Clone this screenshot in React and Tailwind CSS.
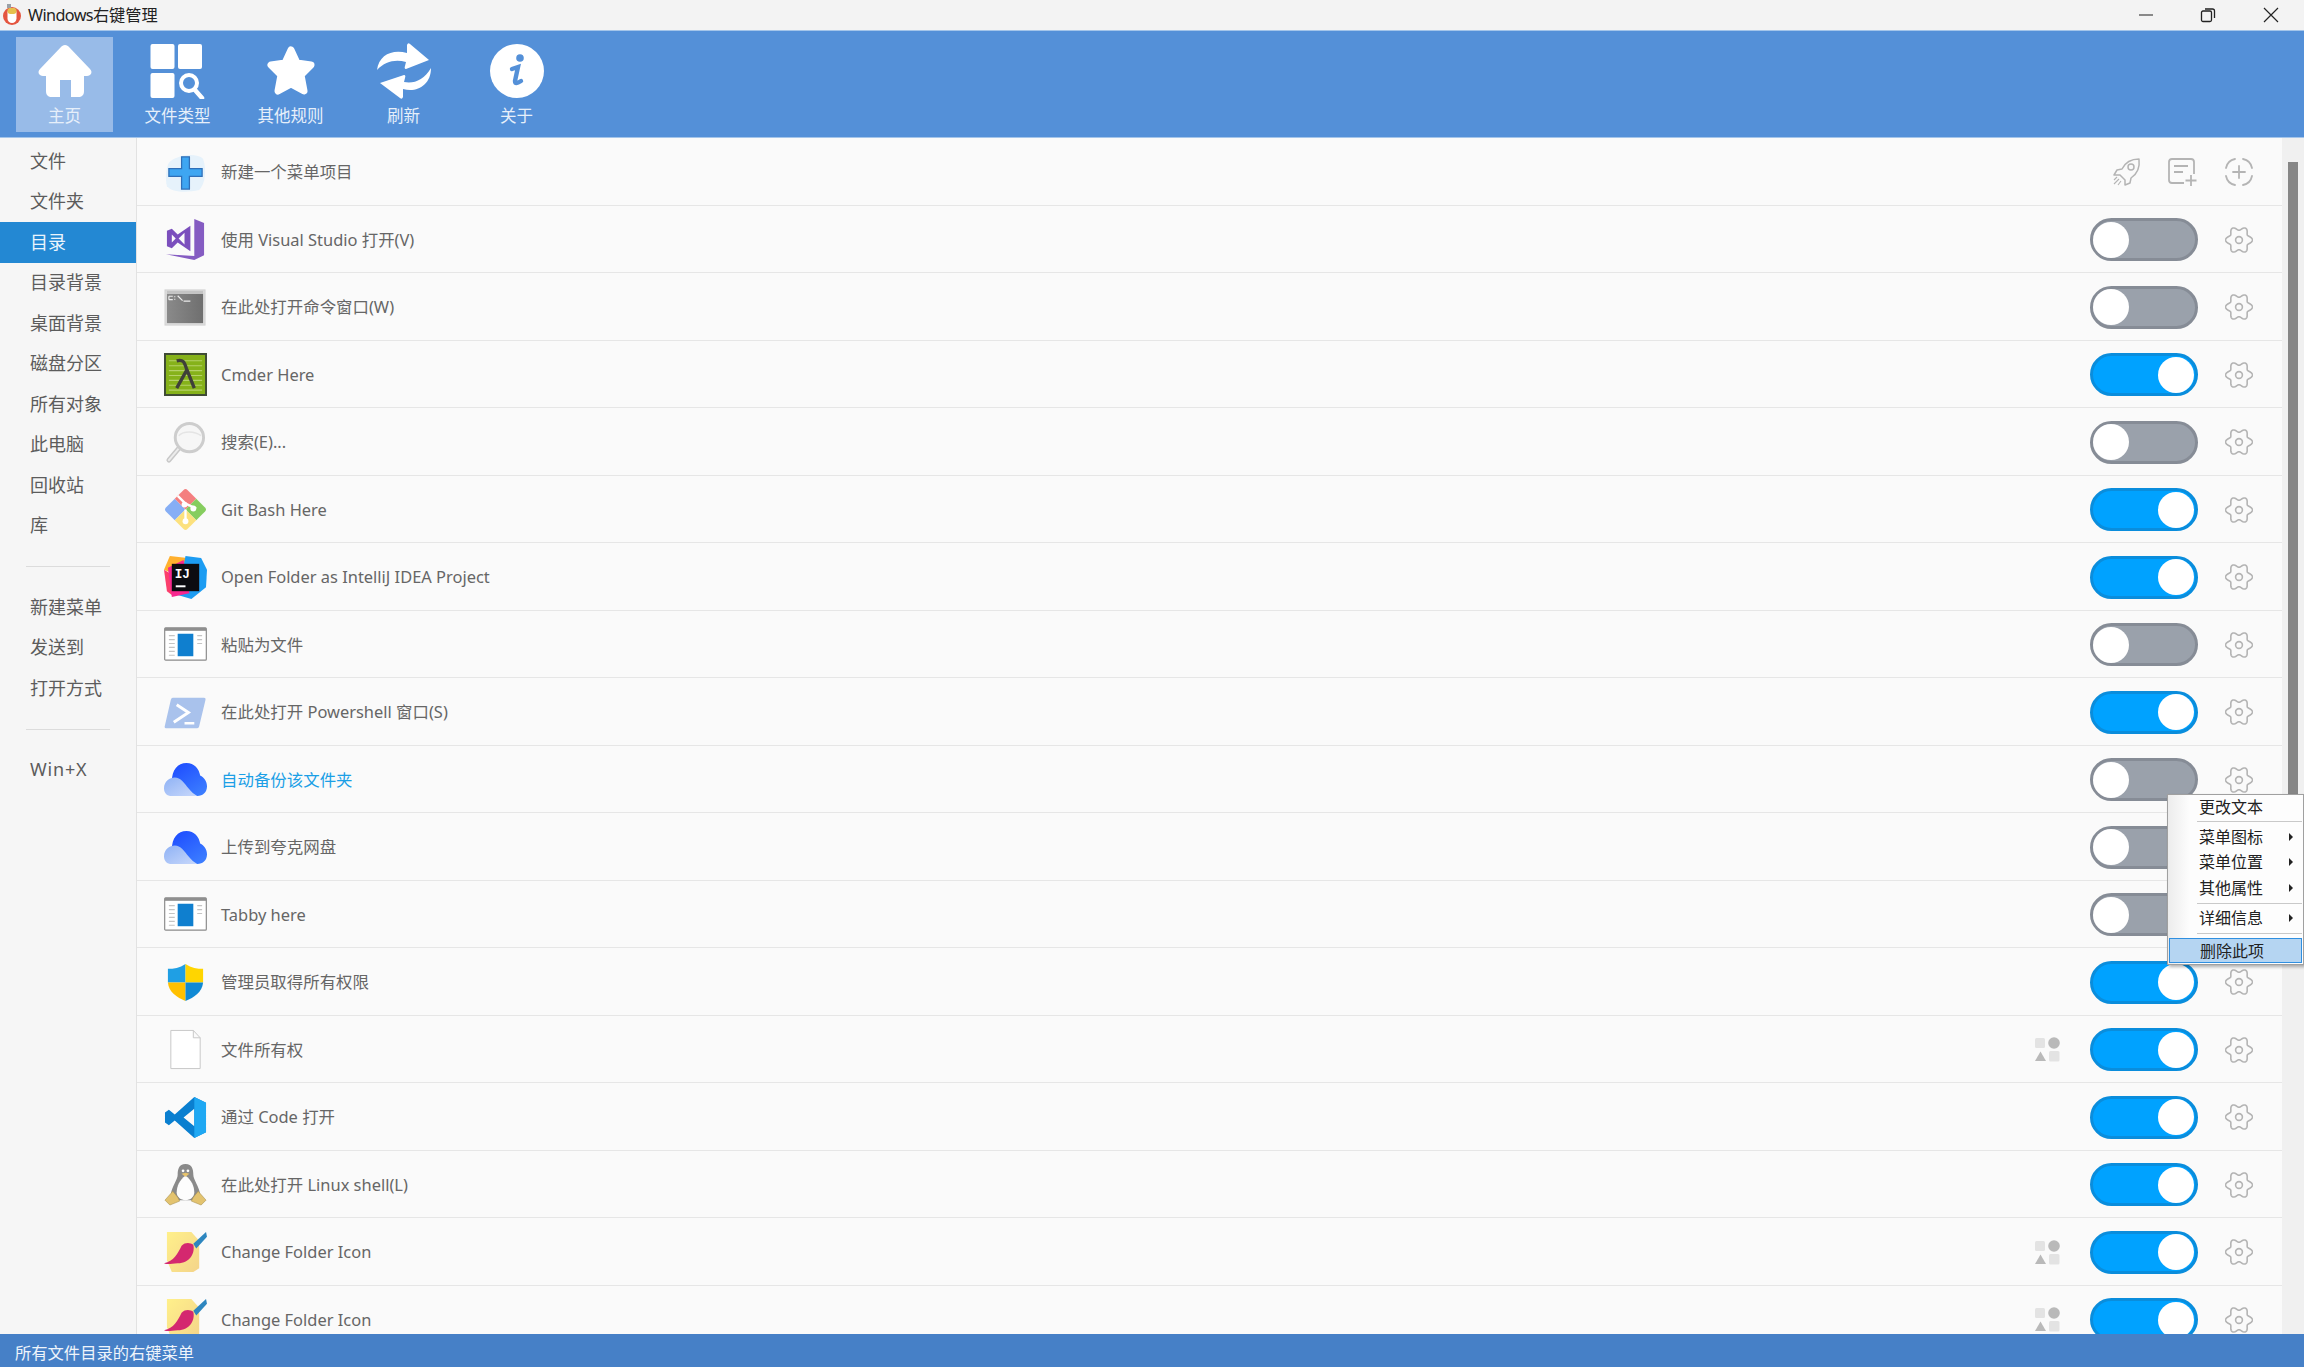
import React from "react";

const gearD = (() => {
  let d = "";
  for (let i = 0; i <= 96; i++) {
    const t = (i / 96) * Math.PI * 2;
    const r = 11.6 + 1.9 * Math.cos(6 * t);
    d += (i ? "L" : "M") + (14 + r * Math.cos(t)).toFixed(2) + " " + (14 + r * Math.sin(t)).toFixed(2);
  }
  return d + "Z";
})();

const Gear = () => (
  <svg viewBox="0 0 28 28" className="w-7 h-7" fill="none" stroke="#b4b4b4" strokeWidth="1.6">
    <path d={gearD} strokeLinejoin="round" />
    <circle cx="14" cy="14" r="3.4" />
  </svg>
);

const Toggle = ({ on }) => (
  <div className={`w-[108px] h-[43px] rounded-full border-[3px] flex items-center ${on ? "bg-[#00a2ff] border-[#0a8ddc] justify-end pr-px" : "bg-[#9aa1ab] border-[#868c96] justify-start pl-0"}`}>
    <div className="w-9 h-9 rounded-full bg-white" />
  </div>
);

const Shapes = () => (
  <svg viewBox="0 0 25 25" className="w-[25px] h-[25px]">
    <rect x="0" y="1" width="10" height="10" rx="1.5" fill="#e3e3e3" />
    <circle cx="19" cy="6" r="5.8" fill="#b9b9b9" />
    <path d="M5.5 14.5 L11 24 H0Z" fill="#b9b9b9" />
    <rect x="14" y="14" width="10.5" height="10.5" rx="1.5" fill="#e3e3e3" />
  </svg>
);

const IconPlus = () => (
  <svg viewBox="0 0 44 44" className="w-full h-full">
    <path d="M5 12 C14 3 34 2 40 8 C44 20 42 34 36 40 C22 43 8 42 3 36 C1 28 2 18 5 12Z" fill="#e6f2fb" />
    <path d="M18 6 H26 V18 H39 V26 H26 V39 H18 V26 H5 V18 H18Z" fill="#3ea6f2" stroke="#2f6fb8" strokeWidth="1.3" />
  </svg>
);
const IconVS = () => (
  <svg viewBox="0 0 44 44" className="w-full h-full">
    <path d="M31 1 L41 5 V38 L31 43 L2 37 L31 39Z" fill="#855cc2" />
    <path d="M3 13 L8 11 L14 17 L27 8 V34 L14 25 L8 31 L3 29Z M8 17 V25 L12 21Z M21 15 L15 21 L21 27Z" fill="#7b4fbd" fillRule="evenodd" />
  </svg>
);
const IconCmd = () => (
  <svg viewBox="0 0 44 44" className="w-full h-full">
    <defs>
      <linearGradient id="cmdg" x1="0" y1="0" x2="1" y2="0">
        <stop offset="0" stopColor="#8a8a8a" /><stop offset="1" stopColor="#6f6f6f" />
      </linearGradient>
    </defs>
    <rect x="1" y="4" width="41" height="36" fill="#dddddd" stroke="#d2d2d2" />
    <rect x="3" y="8" width="37" height="30" fill="url(#cmdg)" />
    <rect x="3" y="5" width="37" height="3" fill="#c4c4c4" />
    <path d="M5 10.5 H9 M5 14 H9 M5 10.5 V14 M11 10.5 V11.5 M11 13 V14 M14 10 L19 15 M20 15.5 H27" stroke="#ececec" strokeWidth="1.2" fill="none" />
  </svg>
);
const IconCmder = () => (
  <svg viewBox="0 0 44 44" className="w-full h-full">
    <rect x="0" y="0" width="44" height="44" fill="#3e4a35" />
    <rect x="2" y="2" width="40" height="40" fill="#86b21a" />
    <path d="M5 8H39M5 13H39M5 18H39M5 23H39M5 28H39M5 33H39M5 38H39" stroke="#b5d168" strokeWidth="1.1" />
    <path d="M13 8 C20 6 21 10 23 16 L31 36 M23 18 L13 36" stroke="#3f3f3a" strokeWidth="3.4" fill="none" />
  </svg>
);
const IconSearch = () => (
  <svg viewBox="0 0 44 44" className="w-full h-full">
    <path d="M16 27 L5 40" stroke="#c8c8c8" strokeWidth="5" strokeLinecap="round" />
    <path d="M16 27 L5 40" stroke="#ececec" strokeWidth="2" strokeLinecap="round" />
    <circle cx="26" cy="17" r="14.5" fill="#f6f6f6" stroke="#cdcdcd" strokeWidth="3" />
    <path d="M15 15 C20 10 31 10 38 15" stroke="#e4e4e4" strokeWidth="1.5" fill="none" />
  </svg>
);
const IconGit = () => (
  <svg viewBox="0 0 44 44" className="w-full h-full">
    <path d="M22 22 L11 11 L2 20 Q0 22 2 24 L11 33Z" fill="#86aef5" />
    <path d="M22 22 L11 11 L20 2 Q22 0 24 2 L33 11Z" fill="#f47f7f" />
    <path d="M22 22 L33 11 L42 20 Q44 22 42 24 L33 33Z" fill="#86cd5f" />
    <path d="M22 22 L11 33 L20 42 Q22 44 24 42 L33 33Z" fill="#fce17e" />
    <path d="M14 8 L22 16 M22 22 V33 M22 16 L33 21" stroke="#fff" strokeWidth="2.4" />
    <circle cx="22" cy="34" r="3" fill="#fff" /><circle cx="30" cy="21" r="3" fill="#fff" /><circle cx="21" cy="17" r="3" fill="#fff" />
  </svg>
);
const IconIJ = () => (
  <svg viewBox="0 0 44 44" className="w-full h-full">
    <path d="M6 0 L24 2 L14 20 L0 14Z" fill="#ffb02e" />
    <path d="M0 14 L10 20 L8 40 L3 36Z" fill="#fb3f6c" />
    <path d="M22 0 L38 2 L44 14 L43 32 L28 44 L14 40Z" fill="#1c9cf2" />
    <path d="M4 12 L20 4 L26 38 L8 42Z" fill="#f7278f" />
    <rect x="8" y="8" width="28" height="28" fill="#0c0c10" />
    <text x="11" y="23" fontSize="13" fontWeight="700" fill="#fff" fontFamily="'Liberation Mono',monospace">IJ</text>
    <rect x="12" y="30" width="10" height="2" fill="#fff" />
  </svg>
);
const IconPaste = () => (
  <svg viewBox="0 0 44 44" className="w-full h-full">
    <rect x="0.7" y="5" width="42.6" height="33" rx="1" fill="#fff" stroke="#8a8a8a" strokeWidth="1.2" />
    <rect x="1" y="5" width="42" height="3" fill="#8f8f8f" />
    <rect x="14" y="11" width="16" height="23" fill="#0f7fcf" />
    <path d="M5 13H11M5 17H11M5 21H11M5 25H11M5 29H11M5 33H11M34 13H39M34 17H39M34 21H39" stroke="#c4c4c4" strokeWidth="1.2" />
  </svg>
);
const IconPS = () => (
  <svg viewBox="0 0 44 44" className="w-full h-full">
    <path d="M9 7 H41 Q43 7 42.5 9 L36 36 Q35.6 38 34 38 H2 Q0 38 1 35 L7 9 Q7.5 7 9 7Z" fill="#a9c2ec" />
    <path d="M13 14 L25 22 L10 32" stroke="#fff" strokeWidth="3" fill="none" />
    <path d="M21 33 H31" stroke="#fff" strokeWidth="2.6" />
  </svg>
);
const IconCloud = ({ id }) => (
  <svg viewBox="0 0 44 44" className="w-full h-full">
    <defs>
      <linearGradient id={id} x1="0" y1="0" x2="0.7" y2="1">
        <stop offset="0" stopColor="#1c49ff" /><stop offset="1" stopColor="#3b7cff" />
      </linearGradient>
      <linearGradient id={id + "b"} x1="0" y1="0" x2="1" y2="1">
        <stop offset="0" stopColor="#8fb2f5" /><stop offset="1" stopColor="#c8d8fb" />
      </linearGradient>
    </defs>
    <path d="M8 24 C8 12 14 5 23 5 C31 5 36 11 37 18 C41 20 44 24 44 29 C44 35 40 39 34 39 H26Z" fill={`url(#${id})`} />
    <path d="M0 31 C0 24 6 20 11 20 C17 20 21 26 25 31 C28 35 31 37 34 39 H8 C3 39 0 36 0 31Z" fill={`url(#${id}b)`} />
  </svg>
);
const IconShield = () => (
  <svg viewBox="0 0 44 44" className="w-full h-full">
    <path d="M22 3 C16 7 10 8 4 8 V22 H22Z" fill="#1f9fe4" />
    <path d="M22 3 C28 7 34 8 40 8 V22 H22Z" fill="#ffd500" />
    <path d="M4 22 H22 V41 C13 37 5 32 4 22Z" fill="#ffc000" />
    <path d="M40 22 H22 V41 C31 37 39 32 40 22Z" fill="#1089d4" />
  </svg>
);
const IconFile = () => (
  <svg viewBox="0 0 44 44" className="w-full h-full">
    <path d="M7 2.5 H30 L37 10 V41.5 H7Z M30 2.5 V10 H37" fill="#fff" stroke="#c8c8c8" strokeWidth="1" />
  </svg>
);
const IconCode = () => (
  <svg viewBox="0 0 44 44" className="w-full h-full">
    <path d="M31 1 L43 7 V37 L31 43 L11 25 L5 30 L1 27 V17 L5 14 L11 19Z M31 13 L20 22 L31 31Z" fill="#0a7fd0" fillRule="evenodd" />
    <path d="M31 1 L43 7 V37 L31 43Z" fill="#1fa8f3" />
  </svg>
);
const IconTux = () => (
  <svg viewBox="0 0 44 44" className="w-full h-full">
    <path d="M22 1 C15 1 14 7 14 12 C14 17 8 24 7 32 L12 38 H32 L37 32 C36 24 30 17 30 12 C30 7 29 1 22 1Z" fill="#8a8a8a" />
    <path d="M22 13 C16 17 13 24 13 30 C13 35 17 38 22 38 C27 38 31 35 31 30 C31 24 28 17 22 13Z" fill="#fdfdfd" />
    <circle cx="19.5" cy="8" r="1.4" fill="#fff" /><circle cx="24.5" cy="8" r="1.4" fill="#fff" />
    <path d="M18 11 L22 10 L26 11 L22 14Z" fill="#e8c46c" />
    <path d="M9 29 L14 35 L16 39 L6 43 L1 38Z M35 29 L30 35 L28 39 L38 43 L43 38Z" fill="#e3c36f" stroke="#a9914f" strokeWidth="0.6" />
  </svg>
);
const IconBrush = ({ id }) => (
  <svg viewBox="0 0 44 44" className="w-full h-full">
    <defs>
      <linearGradient id={id} x1="0" y1="0" x2="1" y2="1">
        <stop offset="0" stopColor="#fff08a" /><stop offset="1" stopColor="#f4d48a" />
      </linearGradient>
    </defs>
    <path d="M3 1 H28 L36 10 V38 L30 42 H8 L3 30Z" fill={`url(#${id})`} />
    <path d="M0 33 C10 31 14 23 18 15 C22 11 27 12 30 14 C32 22 27 33 14 33 C8 33 4 35 0 33Z" fill="#d4286f" />
    <path d="M30 13 L43 1 L44 6 L33 18Z" fill="#2d86bf" />
  </svg>
);

const rows = [
  { t: "使用 Visual Studio 打开(V)", i: <IconVS />, on: false },
  { t: "在此处打开命令窗口(W)", i: <IconCmd />, on: false },
  { t: "Cmder Here", i: <IconCmder />, on: true },
  { t: "搜索(E)...", i: <IconSearch />, on: false },
  { t: "Git Bash Here", i: <IconGit />, on: true },
  { t: "Open Folder as IntelliJ IDEA Project", i: <IconIJ />, on: true },
  { t: "粘贴为文件", i: <IconPaste />, on: false },
  { t: "在此处打开 Powershell 窗口(S)", i: <IconPS />, on: true },
  { t: "自动备份该文件夹", i: <IconCloud id="c1" />, on: false, blue: true },
  { t: "上传到夸克网盘", i: <IconCloud id="c2" />, on: false },
  { t: "Tabby here", i: <IconPaste />, on: false },
  { t: "管理员取得所有权限", i: <IconShield />, on: true },
  { t: "文件所有权", i: <IconFile />, on: true, g: true },
  { t: "通过 Code 打开", i: <IconCode />, on: true },
  { t: "在此处打开 Linux shell(L)", i: <IconTux />, on: true },
  { t: "Change Folder Icon", i: <IconBrush id="b1" />, on: true, g: true },
  { t: "Change Folder Icon", i: <IconBrush id="b2" />, on: true, g: true },
];

const Row = ({ icon, text, blue, children }) => (
  <div className="h-[67.5px] shrink-0 flex items-center border-b border-[#e6e6e6] pt-[2px] pl-[27px] pr-[29px]">
    <div className="w-[43px] h-[43px] shrink-0">{icon}</div>
    <div className={`ml-[14px] mt-px text-[16.45px] ${blue ? "text-[#1b9fe6]" : "text-[#666666]"}`}>{text}</div>
    <div className="flex-1" />
    {children}
  </div>
);

const tabs = [
  {
    l: "主页", active: true,
    s: <path fill="#fff" d="M28 2 C30 2 31 3 32 4 L53 26 C56 29 54 33 50 33 H47 V48 C47 52 45 54 41 54 H34 V37 H23 V54 H15 C11 54 9 52 9 48 V33 H6 C2 33 0 29 3 26 L24 4 C25 3 26 2 28 2Z" />,
  },
  {
    l: "文件类型",
    s: (
      <g fill="#fff">
        <rect x="0.5" y="1" width="24" height="25" rx="2" />
        <rect x="28" y="1" width="24" height="25" rx="2" />
        <rect x="0.5" y="30" width="24" height="25" rx="2" />
        <circle cx="39" cy="40" r="8" fill="none" stroke="#fff" strokeWidth="4" />
        <path d="M45 47 L52 55" stroke="#fff" strokeWidth="4.5" strokeLinecap="round" />
      </g>
    ),
  },
  {
    l: "其他规则",
    s: <path fill="#fff" stroke="#fff" strokeWidth="7" strokeLinejoin="round" d="M28 7 L34 20 L48 22 L38 32 L41 48 L28 41 L15 48 L18 32 L8 22 L22 20Z" />,
  },
  {
    l: "刷新",
    s: (
      <g fill="#fff">
        <path d="M1 27 C3 12 16 6 31 10 L31 2 Q32 -1 34 1 L53 17 L30 26 Q28 26 29 23 L30 19 C20 16 9 18 1 27Z" />
        <path d="M55 25 C55 42 41 50 27 46 L27 54 Q26 57 24 55 L4 40 L28 32 Q30 32 29 35 L28 39 C38 41 48 37 55 25Z" />
      </g>
    ),
  },
  {
    l: "关于",
    s: (
      <g>
        <circle cx="28" cy="28" r="27" fill="#fff" />
        <circle cx="31" cy="15" r="3.8" fill="#5490d8" />
        <path d="M23 26 L29 24 L26 38 Q26 42 32 38" fill="none" stroke="#5490d8" strokeWidth="4.4" strokeLinecap="round" />
      </g>
    ),
  },
];

const side1 = ["文件", "文件夹", "目录", "目录背景", "桌面背景", "磁盘分区", "所有对象", "此电脑", "回收站", "库"];
const side2 = ["新建菜单", "发送到", "打开方式"];
const SideItem = ({ t, active, wide }) => (
  <div className={`h-[40.5px] flex items-center pl-[30px] text-[18px] ${wide ? "tracking-[0.8px]" : ""} ${active ? "bg-[#2388d3] text-[#eaf4fc]" : "text-[#5c5c5c]"}`}>{t}</div>
);
const Hr = () => <div className="h-px bg-[#dcdcdc] mx-[26px] my-5" />;

const Arrow = () => <span className="ml-auto mr-[10px] w-0 h-0 border-y-[4px] border-y-transparent border-l-[4px] border-l-[#222222]" />;
const MI = ({ t, arrow, h = "h-[25.5px]", active }) => (
  <div className={`${h} flex items-center text-[16px] text-[#222222] ${active ? "bg-[#b5d5f2] border border-[#2f8fe0] mx-px pl-[30px]" : "pl-[31px]"}`}>
    <span>{t}</span>
    {arrow && <Arrow />}
  </div>
);
const MS = ({ y = "my-[2px]" }) => <div className={`h-px bg-[#c9c9c9] ml-[29px] mr-px ${y}`} />;

export default function App() {
  return (
    <div className="w-[2304px] h-[1367px] relative overflow-hidden flex flex-col bg-[#fafafa] font-['Noto_Sans','Noto_Sans_CJK_SC',sans-serif]">
      <div className="h-[30px] shrink-0 bg-[#f3f3f3] flex items-center">
        <svg viewBox="0 0 20 22" className="w-5 h-[22px] ml-[2px]">
          <circle cx="10" cy="12" r="9" fill="#e4553f" />
          <rect x="5.5" y="4" width="9" height="15" rx="4.5" fill="#fff" />
          <rect x="5.5" y="4" width="9" height="6" rx="3" fill="#e5c04c" />
          <rect x="5" y="0" width="4" height="4" fill="#9aa0a6" />
        </svg>
        <span className="ml-[6px] text-[16.2px] text-[#222222]"><span className="tracking-[-0.6px]">Windows</span>右键管理</span>
        <div className="flex-1" />
        <svg viewBox="0 0 16 16" className="w-4 h-4 mr-[46px]"><path d="M1 8 H15" stroke="#444" strokeWidth="1.2" /></svg>
        <svg viewBox="0 0 16 16" className="w-4 h-4 mr-[47.5px]" fill="none" stroke="#222" strokeWidth="1.3"><rect x="1.5" y="4" width="10" height="10.5" rx="1.5" /><path d="M5 2 H12.5 Q14.5 2 14.5 4 V11" /></svg>
        <svg viewBox="0 0 16 16" className="w-4 h-4 mr-[25px]" stroke="#222" strokeWidth="1.2"><path d="M1 1 L15 15 M15 1 L1 15" /></svg>
      </div>

      <div className="h-[108px] shrink-0 bg-[#5490d8] border-y border-[#a4c5ea] pl-4 pt-[6px] flex gap-4 items-start">
        {tabs.map((x) => (
          <div key={x.l} className={`w-[97px] h-[95px] flex flex-col items-center pt-[6px] ${x.active ? "bg-[#98bbe8]" : ""}`}>
            <svg viewBox="0 0 56 56" className="w-[56px] h-[56px] shrink-0">{x.s}</svg>
            <div className="text-[16.5px] leading-5 mt-[7px] text-[#e6effa]">{x.l}</div>
          </div>
        ))}
      </div>

      <div className="flex-1 min-h-0 flex">
        <div className="w-[137px] shrink-0 bg-[#f6f6f6] border-r border-[#e2e2e2] pt-[3px]">
          {side1.map((t) => <SideItem key={t} t={t} active={t === "目录"} />)}
          <Hr />
          {side2.map((t) => <SideItem key={t} t={t} />)}
          <Hr />
          <SideItem t="Win+X" wide />
        </div>

        <div className="flex-1 min-w-0 flex flex-col overflow-hidden">
          <Row icon={<IconPlus />} text="新建一个菜单项目">
            <svg viewBox="0 0 30 30" className="w-[30px] h-[30px] mr-[25px]" fill="none" stroke="#b4b4b4" strokeWidth="1.5" strokeLinejoin="round">
              <path d="M27 2 C19 2 13 6 10 12 L5 13 L2 18 L8 18 L13 23 L13 28 L18 26 L19 21 C25 17 28 10 27 2Z" />
              <circle cx="19" cy="10" r="3" />
              <path d="M7 22 L2 27 M9 24 L6 28 M5 20 L2 23" strokeWidth="1.1" />
            </svg>
            <svg viewBox="0 0 30 30" className="w-[30px] h-[30px] mr-[28px]" fill="none" stroke="#b4b4b4" strokeWidth="1.8">
              <path d="M17 26 H5 Q2 26 2 23 V5 Q2 2 5 2 H24 Q27 2 27 5 V17" />
              <path d="M7 9 H21 M7 15 H16 M24 18 V29 M18.5 23.5 H29.5" />
            </svg>
            <svg viewBox="0 0 28 28" className="w-7 h-7" fill="none" stroke="#b4b4b4" strokeWidth="1.8" strokeLinecap="round">
              <path d="M1 10 C2 5 5 2 10 1 M18 1 C23 2 26 5 27 10 M27 18 C26 23 23 26 18 27 M10 27 C5 26 2 23 1 18" />
              <path d="M14 8 V20 M8 14 H20" />
            </svg>
          </Row>
          {rows.map((r, k) => (
            <Row key={k} icon={r.i} text={r.t} blue={r.blue}>
              {r.g && <div className="mr-[30px] flex"><Shapes /></div>}
              <Toggle on={r.on} />
              <div className="ml-[27px] flex"><Gear /></div>
            </Row>
          ))}
        </div>

        <div className="w-[22px] shrink-0 bg-[#f0f0f0] pl-[6px] pt-[24px]">
          <div className="w-[10px] h-[720px] bg-[#868686]" />
        </div>
      </div>

      <div className="h-[33px] shrink-0 bg-[#4680c7] flex items-center pl-[15px] pt-[5px] text-[16.3px] text-[#eef4fb]">所有文件目录的右键菜单</div>

      <div className="absolute left-[2167px] top-[794px] w-[137px] h-[171px] border border-[#a0a0a0] shadow-[2px_2px_3px_rgba(0,0,0,0.3)] bg-gradient-to-r from-[#ececec] to-[#fdfdfd] to-[16%] flex flex-col">
        <MI t="更改文本" h="h-[24px]" />
        <MS />
        <MI t="菜单图标" arrow />
        <MI t="菜单位置" arrow />
        <MI t="其他属性" arrow />
        <MS />
        <MI t="详细信息" arrow />
        <MS y="mt-[2px] mb-[4px]" />
        <MI t="删除此项" active h="h-[25px]" />
      </div>
    </div>
  );
}
